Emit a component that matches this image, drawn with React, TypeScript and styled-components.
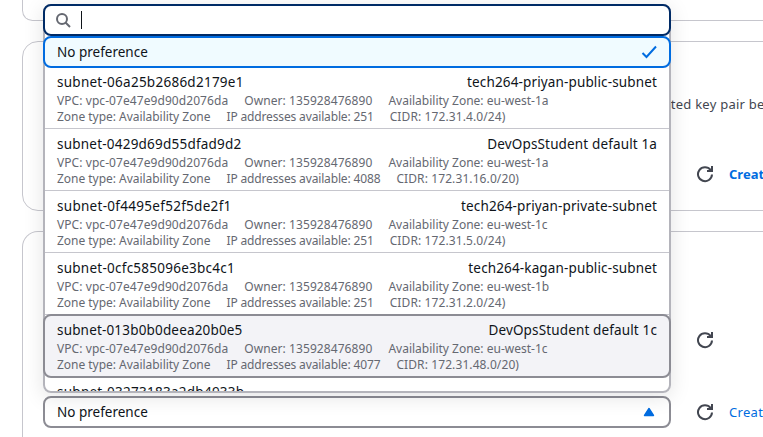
import React from 'react';
import styled, { createGlobalStyle, css } from 'styled-components';

const GlobalStyle = createGlobalStyle`
  *, *::before, *::after { box-sizing: border-box; }
  body {
    margin: 0;
    background: #fff;
    color: #0f141a;
    font: 14px/20px 'Noto Sans', 'Open Sans', sans-serif;
  }
`;

const Page = styled.main`
  height: 437px;
  overflow: hidden;
  display: flex;
  flex-direction: column;
  gap: 20px;
  padding-left: 22px;
`;

const Card = styled.section<{ $height: number; $open?: 'top' | 'bottom' }>`
  flex: none;
  width: 800px;
  height: ${p => p.$height}px;
  border: 1px solid #c6c6cd;
  border-radius: 16px;
  padding-left: 20px;
  ${p => p.$open === 'top' && css`border-top: 0; border-top-left-radius: 0;`}
  ${p => p.$open === 'bottom' && css`border-bottom: 0; border-bottom-left-radius: 0;`}
`;

const Hint = styled.p`
  margin: 0;
  padding: 52px 0 0 596px;
  color: #424650;
  font-size: 13px;
  letter-spacing: 0.25px;
  white-space: nowrap;
`;

const FieldRow = styled.div<{ $top: number }>`
  display: flex;
  align-items: center;
  height: 32px;
  margin-top: ${p => p.$top}px;
`;

const FieldSlot = styled.div`
  position: relative;
  flex: none;
  width: 628px;
  height: 32px;
`;

const RefreshSvg = styled.svg`
  flex: none;
  width: 18px;
  height: 18px;
  margin: 0 15px 0 25px;
  fill: none;
  stroke: #424650;
  stroke-width: 2;
`;

const Link = styled.a<{ $bold?: boolean }>`
  color: #006ce0;
  font-size: 13px;
  font-weight: ${p => (p.$bold ? 700 : 400)};
  letter-spacing: ${p => (p.$bold ? 0 : 0.3)}px;
  white-space: nowrap;
`;

const Trigger = styled.div`
  display: flex;
  align-items: center;
  justify-content: space-between;
  height: 32px;
  padding: 0 14px 0 12px;
  border: 2px solid #8c8c94;
  border-radius: 8px;
  background: #fff;
`;

const Menu = styled.div`
  position: absolute;
  left: 0;
  bottom: 35px;
  width: 628px;
  height: 389px;
  border-radius: 8px;
  background: #fff;
  box-shadow: 0 4px 20px 1px rgba(0, 7, 22, 0.1), inset 0 0 0 2px #b4b4bb;
`;

const Search = styled.div`
  height: 32px;
  display: flex;
  align-items: center;
  gap: 10px;
  padding-left: 10px;
  border: 2px solid #002b66;
  border-radius: 8px;
  background: #fff;
`;

const Caret = styled.span`
  width: 1px;
  height: 18px;
  background: #0f141a;
`;

const Options = styled.div`
  height: 355px;
  overflow: hidden;
`;

const Option = styled.div<{ $state?: 'selected' | 'hover' }>`
  height: 62px;
  margin: 0 2px;
  padding: 5px 12px 0;
  border-bottom: 1px solid #c6c6cd;
  ${p => p.$state === 'selected' && css`
    height: 32px;
    margin: 0 0 -1px;
    padding: 4px 12px 0;
    border: 2px solid #006ce0;
    border-radius: 8px;
    background: #f0fbff;
  `}
  ${p => p.$state === 'hover' && css`
    height: 64px;
    margin: -1px 0;
    padding: 4px 12px 0;
    border: 2px solid #8c8c94;
    border-radius: 8px;
    background: #f3f3f7;
  `}
`;

const OptionHead = styled.div`
  display: flex;
  justify-content: space-between;
  height: 21px;
`;

const Name = styled.span<{ $spacing?: number }>`
  font-size: 13.5px;
  letter-spacing: ${p => p.$spacing ?? 0}px;
  white-space: nowrap;
`;

const Details = styled.div`
  display: flex;
  gap: 16px;
  height: 16px;
  color: #656871;
  font-size: 12px;
  line-height: 16px;
  white-space: nowrap;
`;

const Detail = styled.span<{ $spacing?: number }>`
  letter-spacing: ${p => p.$spacing ?? 0}px;
`;

const Refresh = () => (
  <RefreshSvg viewBox="0 0 18 18">
    <path d="M16 9.5A7 7 0 1 1 14.6 5" />
    <path d="M16 1v5h-5" />
    <path d="M16 2.5V6h-3.5Z" fill="#424650" stroke="none" />
  </RefreshSvg>
);

const subnets = [
  { id: 'subnet-06a25b2686d2179e1', name: 'tech264-priyan-public-subnet', zone: 'eu-west-1a', ips: '251', cidr: '172.31.4.0/24)', spacing: 0.26 },
  { id: 'subnet-0429d69d55dfad9d2', name: 'DevOpsStudent default 1a', zone: 'eu-west-1a', ips: '4088', cidr: '172.31.16.0/20)', spacing: 0.22 },
  { id: 'subnet-0f4495ef52f5de2f1', name: 'tech264-priyan-private-subnet', zone: 'eu-west-1c', ips: '251', cidr: '172.31.5.0/24)', spacing: 0.29 },
  { id: 'subnet-0cfc585096e3bc4c1', name: 'tech264-kagan-public-subnet', zone: 'eu-west-1b', ips: '251', cidr: '172.31.2.0/24)', spacing: 0.25 },
  { id: 'subnet-013b0b0deea20b0e5', name: 'DevOpsStudent default 1c', zone: 'eu-west-1c', ips: '4077', cidr: '172.31.48.0/20)', spacing: 0.17, hover: true },
  { id: 'subnet-03273183a2db4933b', name: '', zone: 'eu-west-1b', ips: '4091', cidr: '172.31.32.0/20)', spacing: 0.26 },
];

export default function App() {
  return (
    <>
      <GlobalStyle />
      <Page>
        <Card $height={21} $open="top" />
        <Card $height={170}>
          <Hint>selected key pair before you launch the instance.</Hint>
          <FieldRow $top={44}>
            <FieldSlot />
            <Refresh />
            <Link $bold>Create new key pair</Link>
          </FieldRow>
        </Card>
        <Card $height={220} $open="bottom">
          <FieldRow $top={92}>
            <FieldSlot />
            <Refresh />
          </FieldRow>
          <FieldRow $top={40}>
            <FieldSlot>
              <Trigger>
                <Name>No preference</Name>
                <svg width="12" height="10" viewBox="0 0 12 10">
                  <path d="M6 1.5 10.5 8.5H1.5Z" fill="#006ce0" stroke="#006ce0" strokeWidth="1.4" strokeLinejoin="round" />
                </svg>
              </Trigger>
              <Menu>
                <Search>
                  <svg width="16" height="16" viewBox="0 0 16 16" fill="none" stroke="#656871" strokeWidth="2">
                    <circle cx="7" cy="7" r="5" />
                    <path d="m10.5 10.5 4.5 4.5" />
                  </svg>
                  <Caret />
                </Search>
                <Options>
                  <Option $state="selected">
                    <OptionHead>
                      <Name>No preference</Name>
                      <svg width="16" height="18" viewBox="0 0 16 18">
                        <path d="m1.5 11 4 4L15 4.5" fill="none" stroke="#006ce0" strokeWidth="2" />
                      </svg>
                    </OptionHead>
                  </Option>
                  {subnets.map(s => (
                    <Option key={s.id} $state={s.hover ? 'hover' : undefined}>
                      <OptionHead>
                        <Name $spacing={s.spacing}>{s.id}</Name>
                        <Name $spacing={0.14}>{s.name}</Name>
                      </OptionHead>
                      <Details>
                        <Detail $spacing={0.07}>VPC: vpc-07e47e9d90d2076da</Detail>
                        <Detail $spacing={0.08}>Owner: 135928476890</Detail>
                        <Detail>Availability Zone: {s.zone}</Detail>
                      </Details>
                      <Details>
                        <Detail $spacing={-0.03}>Zone type: Availability Zone</Detail>
                        <Detail $spacing={-0.15}>IP addresses available: {s.ips}</Detail>
                        <Detail $spacing={0.1}>CIDR: {s.cidr}</Detail>
                      </Details>
                    </Option>
                  ))}
                </Options>
              </Menu>
            </FieldSlot>
            <Refresh />
            <Link>Create new subnet</Link>
          </FieldRow>
        </Card>
      </Page>
    </>
  );
}
